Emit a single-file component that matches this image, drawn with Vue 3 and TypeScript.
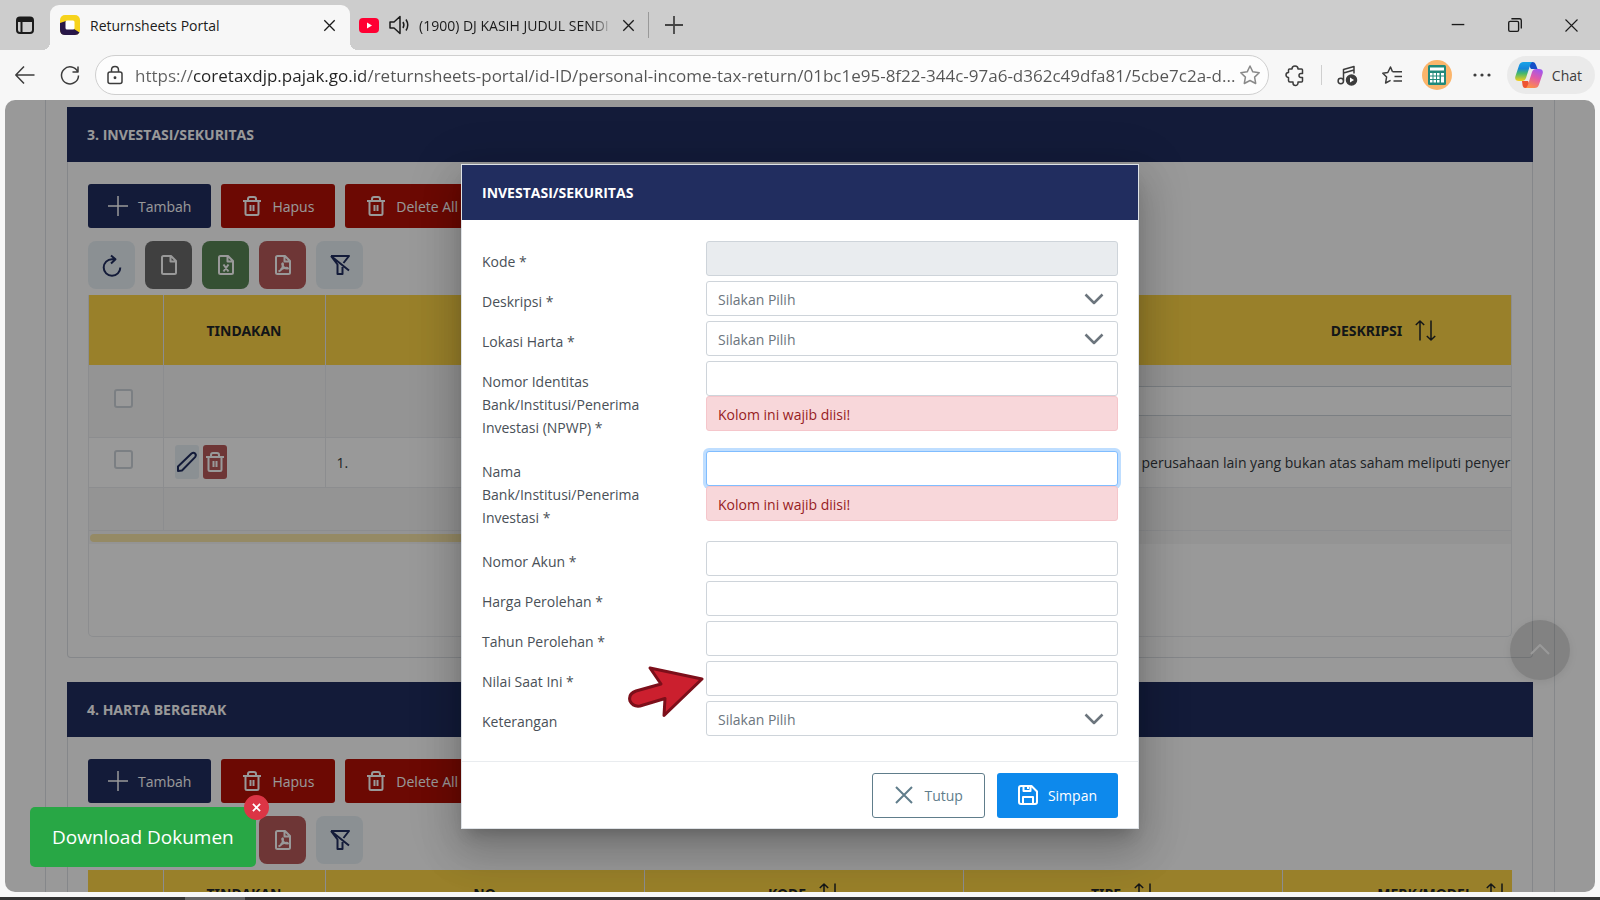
<script setup lang="ts">
import { h, ref } from 'vue'

const shapes: Record<string, string> = {
  plus: '<path d="M10 0v20M0 10h20"/>',
  trash: '<path d="M1 5h18M3.500 5v12.500q0 1.500 1.500 1.500h10q1.500 0 1.500-1.500V5M6 5V3q0-2 2-2h4q2 0 2 2v2M8.500 9v6M11.500 9v6"/>',
  refresh: '<path d="M18.300 12.500a8.300 8.300 0 1 1-8.300-8.300h3M9 .5l4.500 3.700L9 8.500"/>',
  file: '<path d="M4.500 1H12l5 5v11.500q0 1.500-1.500 1.500h-11Q3 19 3 17.500v-15Q3 1 4.500 1zM11.500 1v5.500H17"/>',
  excel: '<path d="M4.500 1H12l5 5v11.500q0 1.500-1.500 1.500h-11Q3 19 3 17.500v-15Q3 1 4.500 1zM11.500 1v5.500H17M7.500 9.500l5 7M12.500 9.500l-5 7"/>',
  pdf: '<path d="M4.500 1H12l5 5v11.500q0 1.500-1.500 1.500h-11Q3 19 3 17.500v-15Q3 1 4.500 1zM11.500 1v5.500H17M5.500 16.500q4-1.500 4.500-7q0-2-.8-.5q.8 5 5.800 4.500q-1-2-7.500 1"/>',
  filter: '<path d="M5 1h14l-5.500 7M1 1l6.500 8.500V19h5v-7M1 1h4M1 1l18 14.500"/>',
  pencil: '<path d="M1 19v-4.500L14.500 1.500q2-1.500 3.600 0q1.500 1.600 0 3.600L5 18.500z"/>',
  sort: '<path d="M5 20.500V1M.8 5L5 1l4.200 4M16 .5V20M11.800 16l4.200 4l4.200-4"/>',
  down: '<path d="M1.500 5.500l8.500 8.500l8.500-8.500"/>',
  up: '<path d="M1 14l9-9l9 9"/>',
  close: '<path d="M2 2l16 16M18 2L2 18"/>',
  save: '<path d="M3 1h10.500L19 6.500V17q0 2-2 2H3q-2 0-2-2V3q0-2 2-2zM5.500 1v5h7V1M5 19v-7h10v7M10 2v2"/>',
  panel: '<rect x="2" y="2.500" width="16" height="15.500" rx="3"/><path d="M2 5h16M2 4h16M3 6h14M6.500 6v12"/>',
  back: '<path d="M19.500 10H1M9 1.500L.8 10L9 18.500"/>',
  reload: '<path d="M17.800 7A8.500 8.500 0 1 0 18.500 10.500M18 1.500V7h-5.500"/>',
  lock: '<rect x="3" y="7" width="14" height="11.500" rx="2"/><path d="M6.500 7V5q0-3.500 3.500-3.500T13.500 5v2"/><circle cx="10" cy="12.700" r=".7" fill="currentColor"/>',
  star: '<path d="M10 1l2.800 5.800l6.400.9l-4.600 4.400l1.100 6.400L10 15.500l-5.700 3l1.100-6.400L.8 7.700l6.400-.9z"/>',
  puzzle: '<path d="M7 4a3 3 0 0 1 6 0h3.500q1 0 1 1v3.500h-1.500a2 2 0 0 0 0 4h1.500V16q0 1-1 1H13v1a2.500 2.500 0 0 1-5 0v-1H5q-1.500 0-1.500-1.500V12.500a2.500 2.500 0 0 1 0-5V5q0-1 1-1z"/>',
  music: '<path d="M6.500 15.500V4.500L17 1.500v7M6.500 8L17 5"/><circle cx="3.800" cy="16" r="2.700"/><circle cx="14.500" cy="15" r="5" fill="currentColor"/><path d="M13 12.500v5l4-2.500z" fill="#fff" stroke="none"/>',
  favorites: '<path d="M10.500 6.800L8.500 2L5.800 7.500l-5 .8l3.800 3.700l-1 6l5-2.600M10.500 6.800H20M12.500 11.500H20M11.500 16H20"/>',
  dots: '<g fill="currentColor" stroke="none"><circle cx="3" cy="10" r="1.600"/><circle cx="10" cy="10" r="1.600"/><circle cx="17" cy="10" r="1.600"/></g>',
  speaker: '<path d="M1 7h4l6-5.500v17L5 13H1zM14 7q1.800 3 0 6M17 4.500q3.500 5.500 0 11"/>',
  minimize: '<path d="M3 9.500h14"/>',
  restore: '<rect x="3" y="6" width="11" height="11" rx="1.500"/><path d="M6 3h9q2 0 2 2v9"/>',
}

const Icon = (props: { name: string; size?: number; weight?: number }) =>
  h('svg', {
    viewBox: '0 0 20 20',
    width: props.size ?? 20,
    height: props.size ?? 20,
    fill: 'none',
    stroke: 'currentColor',
    'stroke-width': props.weight ?? 2,
    'stroke-linejoin': 'round',
    'aria-hidden': 'true',
    overflow: 'visible',
    innerHTML: shapes[props.name],
  })
Icon.props = ['name', 'size', 'weight']

const url = ref('https://coretaxdjp.pajak.go.id/returnsheets-portal/id-ID/personal-income-tax-return/01bc1e95-8f22-344c-97a6-d362c49dfa81/5cbe7c2a-d...')

interface Field { id: string; label: string; kind: 'text' | 'select'; disabled?: boolean; focused?: boolean; error?: boolean }
const fields: Field[] = [
  { id: 'kode', label: 'Kode *', kind: 'text', disabled: true },
  { id: 'deskripsi', label: 'Deskripsi *', kind: 'select' },
  { id: 'lokasi', label: 'Lokasi Harta *', kind: 'select' },
  { id: 'npwp', label: 'Nomor Identitas Bank/Institusi/Penerima Investasi (NPWP) *', kind: 'text', error: true },
  { id: 'nama', label: 'Nama Bank/Institusi/Penerima Investasi *', kind: 'text', error: true, focused: true },
  { id: 'akun', label: 'Nomor Akun *', kind: 'text' },
  { id: 'harga', label: 'Harga Perolehan *', kind: 'text' },
  { id: 'tahun', label: 'Tahun Perolehan *', kind: 'text' },
  { id: 'nilai', label: 'Nilai Saat Ini *', kind: 'text' },
  { id: 'keterangan', label: 'Keterangan', kind: 'select' },
]

const panels = [
  { id: 'investasi', title: '3. INVESTASI/SEKURITAS' },
  { id: 'bergerak', title: '4. HARTA BERGERAK' },
]
const tools = [
  { icon: 'refresh', tone: 'pale', label: 'Muat ulang' },
  { icon: 'file', tone: 'grey', label: 'CSV' },
  { icon: 'excel', tone: 'green', label: 'Excel' },
  { icon: 'pdf', tone: 'red', label: 'PDF' },
  { icon: 'filter', tone: 'pale', label: 'Hapus filter' },
]
const movableColumns = ['KODE', 'TIPE', 'MERK/MODEL']
</script>

<template>
  <div class="browser">
    <header class="tabs">
      <button class="tab-menu" aria-label="Menu tab"><Icon name="panel" :size="20" :weight="2" /></button>
      <div class="tab active">
        <svg class="favicon" viewBox="0 0 20 20" aria-hidden="true">
          <rect width="20" height="20" rx="5" fill="#f6d31c" />
          <path d="M0 8v7q0 5 5 5h10q3 0 4.500-2.500L14 14H6V6z" fill="#281748" />
          <rect x="5.500" y="5.500" width="9" height="9" rx="1.500" fill="#fff" />
        </svg>
        <button class="tab-title">Returnsheets Portal</button>
        <button class="tab-close" aria-label="Tutup tab"><Icon name="close" :size="13" :weight="2" /></button>
      </div>
      <div class="tab second">
        <svg class="youtube" viewBox="0 0 20 15" aria-hidden="true">
          <rect width="20" height="15" rx="4" fill="#ff0033" /><path d="M8 4.500v6l5-3z" fill="#fff" />
        </svg>
        <Icon name="speaker" :size="20" :weight="1.5" />
        <button class="tab-title faded">(1900) DJ KASIH JUDUL SENDI</button>
        <button class="tab-close" aria-label="Tutup tab"><Icon name="close" :size="13" :weight="2" /></button>
      </div>
      <button class="new-tab" aria-label="Tab baru"><Icon name="plus" :size="18" :weight="2" /></button>
      <div class="window-controls">
        <button aria-label="Perkecil"><Icon name="minimize" :size="18" :weight="1.5" /></button>
        <button aria-label="Pulihkan"><Icon name="restore" :size="18" :weight="1.5" /></button>
        <button aria-label="Tutup"><Icon name="close" :size="15" :weight="1.5" /></button>
      </div>
    </header>

    <nav class="toolbar">
      <button class="tool" aria-label="Kembali"><Icon name="back" :weight="1.5" /></button>
      <button class="tool" aria-label="Muat ulang"><Icon name="reload" :weight="1.5" /></button>
      <div class="address">
        <Icon name="lock" :weight="1.5" />
        <input v-model="url" aria-label="Alamat" spellcheck="false">
        <button class="star" aria-label="Favorit"><Icon name="star" :weight="1.5" /></button>
      </div>
      <button class="tool" aria-label="Ekstensi"><Icon name="puzzle" :weight="1.5" /></button>
      <span class="divider"></span>
      <button class="tool" aria-label="Musik"><Icon name="music" :weight="1.5" /></button>
      <button class="tool" aria-label="Daftar favorit"><Icon name="favorites" :weight="1.5" /></button>
      <button class="tool" aria-label="Profil">
        <svg width="30" height="30" viewBox="0 0 30 30" aria-hidden="true">
          <circle cx="15" cy="15" r="15" fill="#fbb56b" />
          <rect x="6" y="5" width="18" height="20" rx="1.500" fill="#20897b" />
          <path d="M8 7.500h14v3H8z" fill="#fff" />
          <g fill="#fff">
            <path d="M8 13h2.500v2.500H8zM11.500 13H14v2.500h-2.500zM15 13h2.500v2.500H15zM19 13h3v2.500h-3zM8 16.500h2.500V19H8zM11.500 16.500H14V19h-2.500zM15 16.500h2.500V19H15zM19 16.500h3v6h-3zM8 20h2.500v2.500H8zM11.500 20H14v2.500h-2.500zM15 20h2.500v2.500H15z" />
          </g>
        </svg>
      </button>
      <button class="tool" aria-label="Lainnya"><Icon name="dots" /></button>
      <button class="chat">
        <svg width="28" height="26" viewBox="0 0 28 26" aria-hidden="true">
          <defs>
            <linearGradient id="cool" x1="0" y1="0" x2="0" y2="1">
              <stop offset="0" stop-color="#19a5e8" /><stop offset=".35" stop-color="#1687d9" />
              <stop offset=".6" stop-color="#45b86c" /><stop offset="1" stop-color="#f6cf1d" />
            </linearGradient>
            <linearGradient id="warm" x1=".7" y1="0" x2=".3" y2="1">
              <stop offset="0" stop-color="#a057ee" /><stop offset=".45" stop-color="#e05aa8" />
              <stop offset="1" stop-color="#ff9145" />
            </linearGradient>
          </defs>
          <path d="M12 0h6q2 0 3 3l1.500 4H16z" fill="#1550c8" />
          <path d="M16 26h-6q-2 0-2.500-3L7 19h6z" fill="#ee5330" />
          <path d="M8.500 0H18q-2 0-3 3.500L11 16q-1 3-4 3H4q-5 0-3.500-5L4 3.500Q5 0 8.500 0z" fill="url(#cool)" />
          <path d="M19.500 26H10q2 0 3-3.500L17 10q1-3 4-3h3q5 0 3.500 5L24 22.500Q23 26 19.500 26z" fill="url(#warm)" />
        </svg>
        <span>Chat</span>
      </button>
    </nav>

    <main class="viewport">
      <div class="page">
        <section v-for="panel in panels" :key="panel.id" class="panel">
          <h2 class="bar">{{ panel.title }}</h2>
          <div class="panel-body">
            <div class="actions">
              <button class="btn navy"><Icon name="plus" :weight="1.5" />Tambah</button>
              <button class="btn danger"><Icon name="trash" :weight="2" />Hapus</button>
              <button class="btn danger"><Icon name="trash" :weight="2" />Delete All</button>
            </div>
            <div class="tools">
              <button v-for="tool in tools" :key="tool.label" :class="['square', tool.tone]" :aria-label="tool.label">
                <Icon :name="tool.icon" />
              </button>
            </div>

            <div v-if="panel.id === 'investasi'" class="grid-box">
              <div class="grid-clip">
                <table class="tall">
                  <colgroup><col class="c-check"><col class="c-act"><col class="c-std"><col class="c-std"><col class="c-wide"></colgroup>
                  <thead>
                    <tr><th></th><th>TINDAKAN</th><th></th><th></th><th><span class="sortable">DESKRIPSI<Icon name="sort" :weight="1.5" /></span></th></tr>
                  </thead>
                  <tbody>
                    <tr class="filters striped">
                      <td class="check"><input type="checkbox" aria-label="Pilih semua"></td><td></td><td></td><td></td>
                      <td><input class="filter-box" type="text" aria-label="Saring deskripsi"></td>
                    </tr>
                    <tr class="record">
                      <td class="check"><input type="checkbox" aria-label="Pilih baris 1"></td>
                      <td>
                        <div class="row-actions">
                          <button class="mini pale" aria-label="Ubah"><Icon name="pencil" /></button>
                          <button class="mini red" aria-label="Hapus"><Icon name="trash" /></button>
                        </div>
                      </td>
                      <td>1.</td><td></td>
                      <td class="description">perusahaan lain yang bukan atas saham meliputi penyer</td>
                    </tr>
                    <tr class="summary striped"><td></td><td colspan="4"></td></tr>
                  </tbody>
                </table>
              </div>
              <div class="scroll-track"><div class="scroll-thumb"></div></div>
            </div>

            <div v-else class="grid-clip">
              <table class="short">
                <colgroup><col class="c-check"><col class="c-act"><col class="c-std"><col class="c-std"><col class="c-std"><col class="c-std"></colgroup>
                <thead>
                  <tr>
                    <th></th><th>TINDAKAN</th><th>NO</th>
                    <th v-for="name in movableColumns" :key="name"><span class="sortable">{{ name }}<Icon name="sort" :weight="1.5" /></span></th>
                  </tr>
                </thead>
              </table>
            </div>
          </div>
        </section>
      </div>

      <button class="to-top" aria-label="Ke atas"><Icon name="up" :weight="2" /></button>

      <div class="overlay">
        <form class="dialog" role="dialog" aria-labelledby="dialog-title" @submit.prevent>
          <h2 id="dialog-title" class="bar">INVESTASI/SEKURITAS</h2>
          <div class="dialog-body">
            <div v-for="field in fields" :key="field.id" class="field">
              <label :for="field.id">{{ field.label }}</label>
              <div class="control">
                <div v-if="field.kind === 'select'" class="select">
                  <select :id="field.id"><option>Silakan Pilih</option></select>
                  <Icon name="down" :weight="2.5" />
                </div>
                <input v-else :id="field.id" type="text" :disabled="field.disabled" :class="{ focused: field.focused }">
                <p v-if="field.error" class="error">Kolom ini wajib diisi!</p>
              </div>
            </div>
          </div>
          <footer>
            <button type="button" class="btn outline"><Icon name="close" :weight="2" />Tutup</button>
            <button type="submit" class="btn primary"><Icon name="save" :weight="2" />Simpan</button>
          </footer>
          <svg class="pointer" width="78" height="52" viewBox="0 0 78 52" aria-hidden="true">
            <path d="M75 14L23 3L34 19L9 26Q1 29 3 36Q6 42 13 41L38 33.500L37 50.500z" />
          </svg>
        </form>
      </div>

      <div class="download">
        <button class="download-main">Download Dokumen</button>
        <button class="download-close" aria-label="Tutup unduhan"><Icon name="close" :size="9" :weight="4" /></button>
      </div>
    </main>
    <div class="taskbar"></div>
  </div>
</template>

<style>
html, body { margin: 0; height: 100%; overflow: hidden; }
</style>

<style scoped>
* { box-sizing: border-box; }
button, input, select { font: inherit; color: inherit; }
button { border: 0; background: none; padding: 0; display: flex; align-items: center; justify-content: center; flex: none; }
svg { flex: none; }

.browser { height: 100vh; display: flex; flex-direction: column; background: #f7f7f7; font-family: "Open Sans", "Noto Sans", sans-serif; font-size: 14px; color: #212529; }

.tabs { display: flex; height: 50px; background: #cdcdcd; color: #1b1b1b; flex: none; }
.tab-menu { width: 50px; }
.tab { display: flex; align-items: center; gap: 10px; }
.tab.active { position: relative; width: 300px; margin-top: 5px; padding: 0 14px 5px 10px; background: #f7f7f7; border-radius: 9px 9px 0 0; }
.tab.active::before, .tab.active::after { content: ""; position: absolute; bottom: 0; width: 8px; height: 8px; }
.tab.active::before { right: 100%; background: radial-gradient(circle at 0 0, #cdcdcd 8px, #f7f7f7 8px); }
.tab.active::after { left: 100%; background: radial-gradient(circle at 100% 0, #cdcdcd 8px, #f7f7f7 8px); }
.favicon { width: 20px; height: 20px; }
.youtube { width: 20px; height: 15px; }
.tab-title { flex: 1; justify-content: flex-start; overflow: hidden; white-space: nowrap; min-width: 0; }
.faded { mask-image: linear-gradient(to right, #000 90%, transparent); }
.tab.second { position: relative; width: 299px; padding: 0 14px 0 9px; }
.tab.second::after { content: ""; position: absolute; right: 0; width: 1px; height: 26px; background: #999; }
.new-tab { width: 49px; color: #444; }
.window-controls { margin-left: auto; display: flex; }
.window-controls button { width: 57px; }

.toolbar { display: flex; align-items: center; height: 50px; padding: 0 5px 0 2px; flex: none; color: #3c3c3c; }
.tool { width: 45px; height: 40px; }
.address { flex: 1; min-width: 0; height: 40px; display: flex; align-items: center; margin: 0 4px 0 3px; padding: 0 8px 0 9px; background: #fdfdfd; border: 1px solid #cfcfcf; border-radius: 20px; }
.address input { flex: 1; min-width: 0; border: 0; outline: 0; padding: 0 0 0 10px; font-size: 17px; color: transparent; background: linear-gradient(to right, #606060 68px, #222 68px, #222 240px, #555 240px) text; }
.star { color: #8a8a8a; }
.divider { width: 1px; height: 20px; margin: 0 3px; background: #cfcfcf; }
.chat { height: 38px; margin-left: 2px; padding: 0 13px 0 8px; gap: 9px; border-radius: 19px; background: #eaeaea; }

.viewport { position: relative; flex: 1; min-height: 0; margin: 0 5px; overflow: hidden; border-radius: 10px; background: #fff; }
.page { margin: 0 40px; padding: 7px 21px 0; border: 1px solid #dee2e6; border-width: 0 1px; }
.panel { margin-bottom: 24px; }
.bar { margin: 0; height: 55px; padding: 0 20px; display: flex; align-items: center; background: #212d5f; color: #fff; font-size: 14px; font-weight: 700; }
.panel-body { padding: 22px 20px 20px; border: 1px solid #dee2e6; border-top: 0; border-radius: 0 0 4px 4px; }
.actions { display: flex; gap: 10px; margin-bottom: 13px; }
.btn { height: 44px; padding: 0 21px; gap: 10px; border-radius: 3px; color: #fff; }
.navy { padding: 0 20px; background: #212d5f; }
.danger { background: #b41006; }
.tools { display: flex; gap: 10px; margin-bottom: 6px; }
.square { width: 47px; height: 48px; border-radius: 8px; }
.pale { background: #e8f1f6; color: #212d5f; }
.grey { background: #6c6c6c; color: #fff; }
.green { background: #598656; color: #fff; }
.red { background: #b85a5a; color: #fff; }

.grid-box { height: 342px; border: 1px solid #e9ecef; border-top: 0; border-radius: 0 0 5px 5px; }
.grid-clip { overflow: hidden; }
table { table-layout: fixed; border-collapse: collapse; }
.tall { width: 1714px; }
.short { width: 1513px; }
.tall .c-check { width: 74px; }
.short .c-check { width: 75px; }
.c-act { width: 162px; }
.c-std { width: 319px; }
.c-wide { width: 840px; }
th { padding: 0; border-right: 1px solid #e9ecef; background: #ffd546; font-family: "Noto Sans", "Open Sans", sans-serif; font-weight: 700; }
.tall th { height: 70px; }
.short th { height: 46px; }
.sortable { display: flex; align-items: center; justify-content: center; gap: 13px; }
td { padding: 0 11px; border-bottom: 1px solid #e9ecef; border-right: 1px solid #e9ecef; color: #343a40; }
.striped { background: #f7f7f7; }
.filters td { height: 72px; }
.record td { height: 50px; }
.summary td { height: 43px; }
.check { text-align: center; padding: 0 16px 6px 11px; }
.check input { appearance: none; width: 19px; height: 19px; margin: 0; vertical-align: middle; border: 2px solid #ced4da; border-radius: 3px; background: #fff; }
.filter-box { width: 100%; height: 30px; border: 1px solid #ced4da; background: #fff; }
.row-actions { display: flex; gap: 4px; }
.mini { width: 24px; height: 34px; border-radius: 3px; }
.description { padding-left: 178px; white-space: nowrap; }
.scroll-track { height: 13px; padding: 3px 1px; background: #f7f7f7; }
.scroll-thumb { width: 54%; height: 8px; border-radius: 4px; background: #f9e6a8; }

.to-top { position: absolute; right: 25px; bottom: 212px; width: 60px; height: 60px; border-radius: 50%; background: rgba(0, 0, 0, .15); box-shadow: 0 2px 8px rgba(0, 0, 0, .08); color: #fff; }

.overlay { position: absolute; inset: 0; display: flex; align-items: center; justify-content: center; background: rgba(0, 0, 0, .4); }
.dialog { position: relative; width: 678px; background: #fff; border: 1px solid #dee2e6; box-shadow: 0 11px 15px -7px rgba(0, 0, 0, .2), 0 24px 38px 3px rgba(0, 0, 0, .14), 0 9px 46px 8px rgba(0, 0, 0, .12); }
.dialog-body { padding: 21px 20px 20px; border-bottom: 1px solid #e9ecef; }
.field { display: grid; grid-template-columns: 224px 1fr; padding-bottom: 5px; }
.field label { width: 180px; padding-top: 9px; line-height: 23px; height: 35px; color: #495057; }
.control input, .select select { display: block; width: 100%; height: 35px; padding: 0 11px; border: 1px solid #ced4da; border-radius: 3px; background: #fff; outline: 0; }
.control input:disabled { background: #e9ecef; }
.control input.focused { border-color: #80bdff; box-shadow: 0 0 0 3px #bfdeff; }
.select { position: relative; }
.select select { appearance: none; padding: 2px 11px 0; color: #6c757d; }
.select svg { position: absolute; right: 14px; top: 8px; color: #6c757d; pointer-events: none; }
.error { position: relative; margin: 0 0 15px; height: 35px; padding: 0 11px; border: 1px solid #f5c6cb; border-radius: 3px; background: #f8d7da; line-height: 36px; color: #971c22; }
footer { display: flex; justify-content: flex-end; gap: 12px; padding: 11px 20px 10px; }
.outline { border: 1px solid #607d8b; color: #607d8b; height: 45px; }
.primary { background: #0d89ec; height: 45px; }
.pointer { position: absolute; left: 165px; top: 500px; }
.pointer path { fill: #cb1f2e; stroke: #7c0f1a; stroke-width: 3; stroke-linejoin: round; }

.download { position: absolute; left: 25px; bottom: 25px; }
.download-main { height: 60px; padding: 0 22px; border-radius: 5px; background: #28a745; color: #fff; font-size: 19px; }
.download-close { position: absolute; right: -13px; top: -12px; width: 25px; height: 25px; border-radius: 50%; background: #dc3545; color: #fff; }
.taskbar { height: 3px; margin-top: 5px; background: linear-gradient(to right, #333 185px, #666 185px, #666 245px, #333 245px); flex: none; }
</style>
